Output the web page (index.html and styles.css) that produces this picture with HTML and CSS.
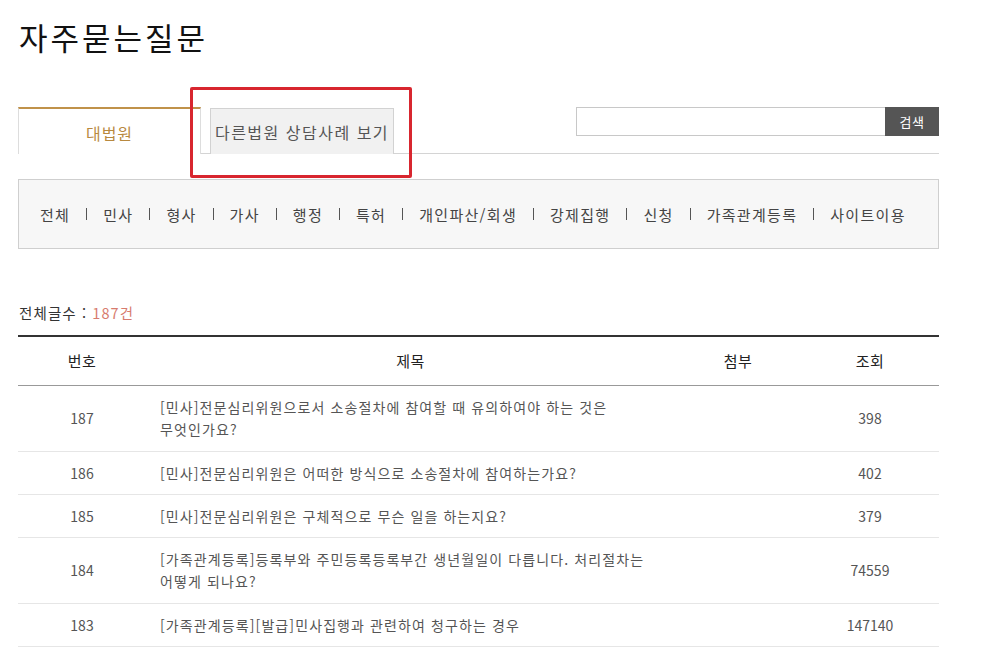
FILE: index.html
```html
<!DOCTYPE html>
<html lang="ko">
<head>
<meta charset="utf-8">
<title>자주묻는질문</title>
<link rel="stylesheet" href="styles.css">
</head>
<body>
<div class="page">
  <h1 class="title">자주묻는질문</h1>

  <div class="tabbar">
    <a class="tab tab-active">대법원</a>
    <a class="tab tab-other">다른법원 상담사례 보기</a>
    <form class="search">
      <input class="search-input" type="text">
      <button class="search-btn" type="button">검색</button>
    </form>
    <div class="highlight"></div>
  </div>

  <div class="cats">
    <span>전체</span><i></i><span>민사</span><i></i><span>형사</span><i></i><span>가사</span><i></i><span>행정</span><i></i><span>특허</span><i></i><span>개인파산/회생</span><i></i><span>강제집행</span><i></i><span>신청</span><i></i><span>가족관계등록</span><i></i><span>사이트이용</span>
  </div>

  <p class="count">전체글수 : <em>187건</em></p>

  <table class="board">
    <thead>
      <tr><th class="c-no">번호</th><th class="c-title">제목</th><th class="c-file">첨부</th><th class="c-view">조회</th></tr>
    </thead>
    <tbody>
      <tr class="tall"><td class="c-no">187</td><td class="c-title l">[민사]전문심리위원으로서 소송절차에 참여할 때 유의하여야 하는 것은<br>무엇인가요?</td><td class="c-file"></td><td class="c-view">398</td></tr>
      <tr><td class="c-no">186</td><td class="c-title l">[민사]전문심리위원은 어떠한 방식으로 소송절차에 참여하는가요?</td><td class="c-file"></td><td class="c-view">402</td></tr>
      <tr><td class="c-no">185</td><td class="c-title l">[민사]전문심리위원은 구체적으로 무슨 일을 하는지요?</td><td class="c-file"></td><td class="c-view">379</td></tr>
      <tr class="tall"><td class="c-no">184</td><td class="c-title l">[가족관계등록]등록부와 주민등록등록부간 생년월일이 다릅니다. 처리절차는<br>어떻게 되나요?</td><td class="c-file"></td><td class="c-view">74559</td></tr>
      <tr><td class="c-no">183</td><td class="c-title l">[가족관계등록][발급]민사집행과 관련하여 청구하는 경우</td><td class="c-file"></td><td class="c-view">147140</td></tr>
    </tbody>
  </table>
</div>
</body>
</html>
```

FILE: styles.css
```css
* { box-sizing: border-box; }
html, body { margin: 0; padding: 0; background: #fff; }
body {
  font-family: "Noto Sans CJK KR", "Noto Sans", sans-serif;
  color: #333;
  overflow: hidden;
}
.page {
  width: 921px;
  margin-left: 18px;
}
.title {
  margin: 0;
  padding-top: 14px;
  height: 107px;
  font-size: 31px;
  line-height: 46px;
  font-weight: 400;
  letter-spacing: 3px;
  color: #111;
  padding-left: 1px;
}
.tabbar {
  position: relative;
  display: flex;
  align-items: flex-start;
  height: 47px;
  border-bottom: 1px solid #d4d4d4;
}
.tab {
  display: flex;
  align-items: center;
  justify-content: center;
  font-size: 16px;
  text-decoration: none;
}
.tab-active {
  width: 183px;
  height: 47px;
  border-top: 2px solid #c0924a;
  border-left: 1px solid #ddd;
  border-right: 1px solid #ddd;
  background: #fff;
  color: #b8893f;
  padding-top: 2px;
  margin-bottom: -1px;
  letter-spacing: 1px;
}
.tab-other {
  margin-left: 9px;
  margin-top: 1px;
  width: 184px;
  height: 46px;
  border: 1px solid #d2d2d2;
  border-bottom: none;
  background: #f1f1f1;
  color: #555;
  padding-top: 0;
  font-size: 16px;
  letter-spacing: 1.5px;
}
.search {
  margin: 0 0 0 auto;
  display: flex;
  height: 29px;
}
.search-input {
  width: 309px;
  height: 29px;
  margin: 0;
  border: 1px solid #c8c8c8;
  border-right: none;
  padding: 0 6px;
  outline: none;
}
.search-btn {
  width: 54px;
  height: 29px;
  margin: 0;
  border: none;
  background: #555;
  color: #fff;
  font-family: "Noto Sans CJK KR", sans-serif;
  font-size: 13px;
  letter-spacing: 0.5px;
  padding: 0;
}
.highlight {
  position: absolute;
  left: 172px;
  top: -20px;
  width: 222px;
  height: 91px;
  border: 3px solid #d8262f;
  border-radius: 2px;
  pointer-events: none;
}
.cats {
  margin-top: 25px;
  height: 70px;
  border: 1px solid #cfcfcf;
  background: #f7f7f7;
  display: flex;
  align-items: center;
  padding-left: 21px;
  font-size: 15px;
  letter-spacing: 1.3px;
  color: #444;
}
.cats i {
  display: inline-block;
  width: 1px;
  height: 12px;
  background: #555;
  margin: 0 16px 0 16px;
}
.count {
  margin: 54px 0 0 1px;
  height: 32px;
  font-size: 14.5px;
  line-height: 20px;
  letter-spacing: 1.1px;
  color: #333;
}
.count em {
  font-style: normal;
  color: #d77b6e;
}
.board {
  width: 921px;
  border-collapse: collapse;
  table-layout: fixed;
  font-size: 14px;
}
.board thead tr {
  border-top: 2px solid #333;
  border-bottom: 1px solid #999;
}
.board th {
  height: 49px;
  font-weight: 400;
  color: #222;
  font-size: 15px;
  letter-spacing: 0.5px;
  text-align: center;
}
.board td {
  height: 43px;
  text-align: center;
  color: #555;
  line-height: 22px;
  border-bottom: 1px solid #e6e6e6;
}
.board tr.tall td { height: 66px; }
.board td.l { text-align: left; padding-left: 14px; letter-spacing: 1.1px; }
.c-no { width: 128px; }
.c-title { width: 529px; }
.c-file { width: 126px; }
.c-view { width: 138px; }
```
